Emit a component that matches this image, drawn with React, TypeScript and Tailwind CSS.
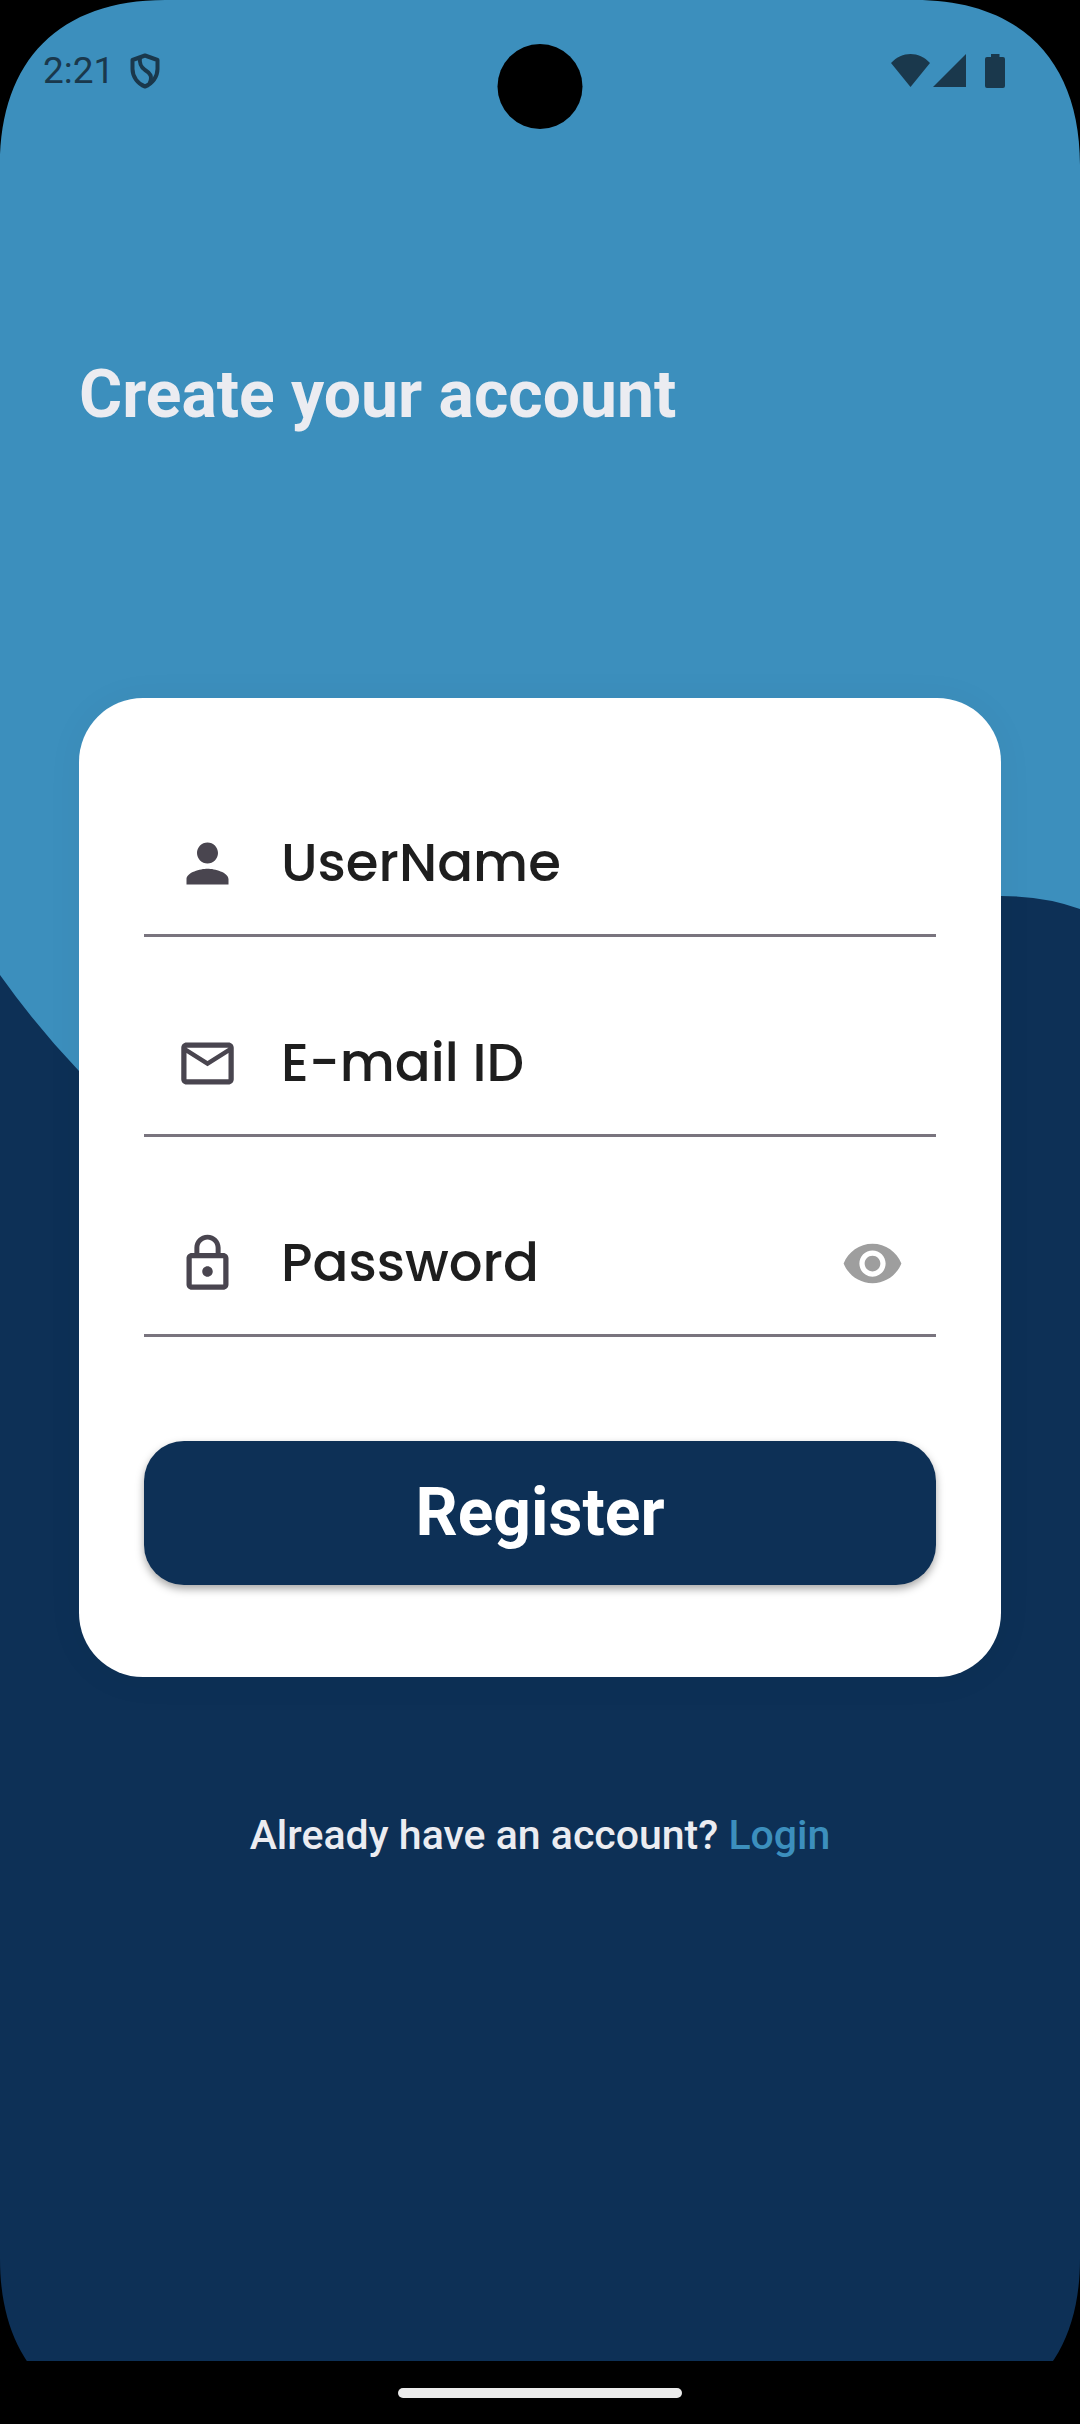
import { useState, type ReactNode } from "react";
import { MdLockOutline, MdMailOutline, MdPerson, MdRemoveRedEye } from "react-icons/md";

function Backdrop() {
  return (
    <svg
      className="absolute inset-0 h-full w-full"
      viewBox="0 0 1080 2424"
      preserveAspectRatio="none"
      aria-hidden="true"
    >
      <path
        fill="#0d3056"
        d="M0 975Q37 1027 79 1071C330 1330 560 1180 700 1060C820 950 900 896 1001 896Q1045 896 1080 909V2424H0Z"
      />
    </svg>
  );
}

function Corner({ className }: { className: string }) {
  return (
    <svg className={`absolute h-[165px] w-[165px] ${className}`} viewBox="0 0 165 165" aria-hidden="true">
      <path fill="#000" d="M0 0H165C60 0 0 60 0 165Z" />
    </svg>
  );
}

function StatusBar() {
  return (
    <div className="flex h-[142px] items-center justify-between pr-[75px] pl-[43px] text-[#1a384c]">
      <div className="flex items-center gap-4">
        <span className="text-[37px] leading-[44px]">2:21</span>
        <svg className="h-[36px] w-[30px]" viewBox="0 0 30 36" fill="none" stroke="currentColor" strokeWidth="4" aria-label="Shield">
          <path strokeLinejoin="round" d="M15 2.500L27.500 7V16C27.500 24 22 31 15 33.500C8 31 2.500 24 2.500 16V7Z" />
          <path d="M10 4C9 11 11 14 15 17C20 20 23 23 19.500 30.500" />
        </svg>
      </div>
      <div className="flex items-center">
        <svg className="h-[34px] w-[39px]" viewBox="0 0 39 34" fill="currentColor" aria-label="Wi-Fi">
          <path d="M0 9C11 -3 28 -3 39 9L19.500 33Z" />
        </svg>
        <svg className="ml-[3px] h-[34px] w-[33px]" viewBox="0 0 33 34" fill="currentColor" aria-label="Signal">
          <path d="M33 0V33H0Z" />
        </svg>
        <svg className="ml-[19px] h-[34px] w-[20px]" viewBox="0 0 20 34" fill="currentColor" aria-label="Battery">
          <path d="M6 0H14.500V3H18Q20 3 20 5V32Q20 34 18 34H2Q0 34 0 32V5Q0 3 2 3H6Z" />
        </svg>
      </div>
    </div>
  );
}

type FieldProps = {
  icon: ReactNode;
  label: string;
  type: string;
  action?: ReactNode;
};

function Field({ icon, label, type, action }: FieldProps) {
  return (
    <label className="flex h-[147px] items-center border-b-3 border-[#79747e] px-8 pt-0.5 text-[63px] text-[#49454f]">
      {icon}
      <input
        type={type}
        placeholder={label}
        aria-label={label}
        className="ml-[42px] min-w-0 flex-1 bg-transparent font-['Poppins','Inter',sans-serif] text-[53px] leading-[78px] font-medium text-[#1e1e1e] outline-none placeholder:text-[#1e1e1e]"
      />
      {action}
    </label>
  );
}

export default function App() {
  const [visible, setVisible] = useState(false);

  return (
    <div className="relative flex min-h-screen flex-col overflow-hidden bg-[#3c8fbd] font-['Roboto',sans-serif]">
      <Backdrop />
      <Corner className="top-0 left-0" />
      <Corner className="top-0 right-0 -scale-x-100" />
      <Corner className="bottom-0 left-0 -scale-y-100" />
      <Corner className="right-0 bottom-0 -scale-100" />
      <div className="absolute top-[44px] left-1/2 size-[85px] -translate-x-1/2 rounded-full bg-black" />

      <div className="relative">
        <StatusBar />
      </div>

      <main className="relative flex flex-1 flex-col px-[79px]">
        <h1 className="mt-[215px] text-[66px] leading-[76px] font-bold text-[#ebecf1]">Create your account</h1>

        <form
          className="mt-[265px] flex flex-col rounded-[64px] bg-white px-[65px] py-[92px] shadow-[0_2px_40px_rgba(0,0,0,0.04)]"
          onSubmit={(event) => event.preventDefault()}
        >
          <div className="flex flex-col gap-[53px]">
            <Field icon={<MdPerson />} label="UserName" type="text" />
            <Field icon={<MdMailOutline />} label="E-mail ID" type="email" />
            <Field
              icon={<MdLockOutline />}
              label="Password"
              type={visible ? "text" : "password"}
              action={
                <button type="button" aria-label="Show password" className="text-[#9e9e9e]" onClick={() => setVisible(!visible)}>
                  <MdRemoveRedEye />
                </button>
              }
            />
          </div>
          <button
            type="submit"
            className="mt-[104px] h-[144px] rounded-[40px] bg-[#0d3056] text-[66px] leading-[76px] font-bold text-white shadow-[0_4px_9px_rgba(0,0,0,0.35)]"
          >
            Register
          </button>
        </form>

        <p className="mt-[134px] text-center text-[41px] leading-[48px] font-medium text-[#ebecf1]">
          Already have an account?{" "}
          <a href="#login" className="text-[#3c8fbd]">
            Login
          </a>
        </p>
      </main>

      <div className="relative flex h-[63px] items-center justify-center bg-black">
        <div className="h-[10px] w-[284px] rounded-full bg-[#ebebeb]" />
      </div>
    </div>
  );
}
